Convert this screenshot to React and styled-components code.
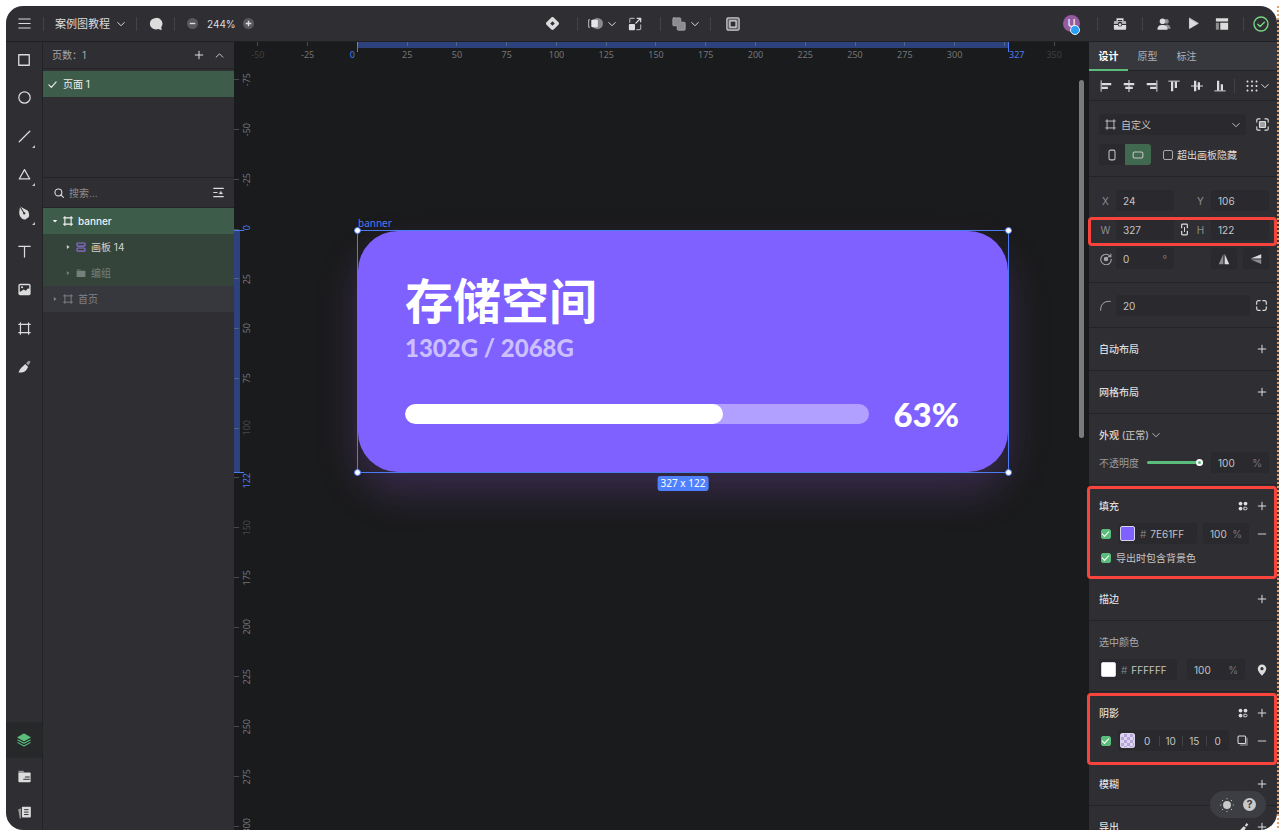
import React from "react";
import styled, { createGlobalStyle, css } from "styled-components";

const c = {
  panel: "#2f2e33",
  raised: "#37383d",
  field: "#2a292d",
  line: "#242427",
  canvas: "#1a1b1c",
  text: "#dcdcdd",
  soft: "#c4c4c6",
  muted: "#8d8d91",
  faint: "#6c6c70",
  green: "#5bbd7c",
  select: "#3d5c4a",
  blue: "#4b7cf3",
  purple: "#7e61ff",
  red: "#f9443e",
};

const Global = createGlobalStyle`
  * { box-sizing: border-box; }
  html, body, #root { height: 100%; }
  body {
    margin: 0;
    background: #fff;
    font: 10px/14px Inter, "Noto Sans CJK SC", sans-serif;
    color: ${c.text};
    overflow: hidden;
  }
  button, input, select { font: inherit; color: inherit; margin: 0; padding: 0; border: 0; background: none; border-radius: 0; }
  button { cursor: pointer; }
  h2, h3, p { margin: 0; font: inherit; }
`;

/* ---------- shell ---------- */

const Page = styled.div`
  height: 100%;
  padding: 6px 1px 3px 6px;
  display: flex;
`;

const Perforation = styled.div`
  width: 2px;
  flex: none;
  background:
    repeating-linear-gradient(to bottom, #dfa26c 0 2px, transparent 2px 4px),
    linear-gradient(to bottom, #fff 14px, #33353c 14px calc(100% - 14px), #fff calc(100% - 14px));
`;

const Window = styled.div`
  flex: 1;
  min-width: 0;
  display: grid;
  grid-template-rows: 36px minmax(0, 1fr);
  border-radius: 17px;
  overflow: hidden;
  background: ${c.panel};
`;

const Body = styled.div`
  display: grid;
  grid-template-columns: 37px 191px minmax(0, 1fr) 188px;
  min-height: 0;
`;

/* ---------- icons ---------- */

const Svg = styled.svg`
  display: block;
  flex: none;
  width: ${(p) => p.$size}px;
  height: ${(p) => p.$size}px;
  fill: none;
  stroke: currentColor;
  stroke-width: ${(p) => p.$w};
  stroke-linecap: round;
  stroke-linejoin: round;
`;

const shapes = {
  menu: <path d="M1 2.500h14M1 8h14M1 13.500h14" />,
  down: <path d="M1.500 5l6.500 6.500L14.500 5" />,
  up: <path d="M2 11l6-6 6 6" />,
  plus: <path d="M8 2v12M2 8h12" />,
  minus: <path d="M2 8h12" />,
  check: <path d="M1.500 8.500l4.500 4.500L14.500 3.500" />,
  comment: <path d="M8 1a7 6.600 0 1 0 0 13.200c1 0 2-.2 2.800-.5L14.500 15l-.5-3.500A6.600 6.600 0 0 0 8 1z" fill="currentColor" stroke="none" />,
  zoomOut: (
    <g stroke="none">
      <circle cx="8" cy="8" r="8" fill="#59595d" />
      <rect x="4" y="7" width="8" height="2" fill="#dedede" />
    </g>
  ),
  zoomIn: (
    <g stroke="none">
      <circle cx="8" cy="8" r="8" fill="#59595d" />
      <path d="M7 4h2v3h3v2H9v3H7V9H4V7h3z" fill="#dedede" />
    </g>
  ),
  component: (
    <path
      fill="currentColor"
      stroke="none"
      fillRule="evenodd"
      d="M8 0c.6 0 1 .2 1.400.6l6 6c.8.8.8 2 0 2.800l-6 6c-.8.8-2 .8-2.800 0l-6-6c-.8-.8-.8-2 0-2.800l6-6C7 .2 7.400 0 8 0zM8 5.200L5.200 8 8 10.800 10.800 8z"
    />
  ),
  mask: (
    <g>
      <circle cx="10" cy="8" r="6" fill="#8a8a8d" stroke="none" />
      <rect x="3.500" y="4" width="7" height="8" rx="1" fill="#e6e6e6" stroke="none" />
      <path d="M1.700 4H.7v8h1" stroke="#c4c4c6" />
    </g>
  ),
  scale: (
    <g>
      <path d="M2 6V2.500A1 1 0 0 1 3 1.500h4M14.500 9v4.500a1 1 0 0 1-1 1H10" stroke="#a5a5a8" />
      <rect x="1" y="8" width="7" height="7" rx="1" fill="#dedede" stroke="none" />
      <path d="M9 7l5-5M10.500 1.500h4v4" />
    </g>
  ),
  union: (
    <path
      d="M2 1h7a1 1 0 0 1 1 1v4h4a1 1 0 0 1 1 1v7a1 1 0 0 1-1 1H7a1 1 0 0 1-1-1v-4H2a1 1 0 0 1-1-1V2a1 1 0 0 1 1-1z"
      fill="#8d8d90"
      stroke="#a8a8aa"
    />
  ),
  slice: (
    <g>
      <rect x="1" y="1" width="14" height="14" rx="1.500" fill="#68686b" stroke="#c9c9cb" />
      <rect x="4.500" y="4.500" width="7" height="7" fill={c.panel} />
    </g>
  ),
  briefcase: (
    <g stroke="none">
      <path d="M4 1.500h8v3.500h-1.500V3.500h-5V5H4z" fill="currentColor" />
      <path d="M2 4.500h12a1 1 0 0 1 1 1V8h-4.500a2.500 2.500 0 0 0-5 0H1V5.500a1 1 0 0 1 1-1z" fill="#b2b2b4" />
      <path d="M1 9h4.500a2.600 2.600 0 0 0 5 0H15v4.500a1 1 0 0 1-1 1H2a1 1 0 0 1-1-1z" fill="currentColor" />
      <circle cx="8" cy="8.700" r="1.500" fill="currentColor" />
    </g>
  ),
  people: (
    <g stroke="none">
      <circle cx="10.800" cy="5" r="2.700" fill="#919194" />
      <path d="M10 8.500c3.500 0 5.500 1.500 5.500 5H9z" fill="#919194" />
      <circle cx="6.300" cy="4.800" r="3.200" fill="currentColor" />
      <path d="M.5 14.500c0-4 2-5.500 5.800-5.500s5.700 1.500 5.700 5.500z" fill="currentColor" />
    </g>
  ),
  play: <path d="M3 1.800v12.400L13.500 8z" fill="currentColor" />,
  layout: (
    <g stroke="none" fill="currentColor">
      <path d="M1 1.500h14v3.700H1z" />
      <path d="M1 6.500h3.500v8H1z" fill="#8d8d90" />
      <path d="M6 6.500h9v8H6z" />
    </g>
  ),
  done: (
    <g>
      <circle cx="8" cy="8" r="7" />
      <path d="M4.800 8.200l2.300 2.300 4.300-4.300" />
    </g>
  ),
  square: <rect x="2" y="2" width="12" height="12" />,
  circle: <circle cx="8" cy="8" r="7" />,
  lineTool: <path d="M1.500 14.500l13-13" />,
  triangle: <path d="M8 2L1.500 13.500h13z" />,
  pen: (
    <g stroke="none">
      <path d="M3.500.5L12.500 5.500c1.600 2.500 1.500 5 1 7L9.500 15.500C5 15 2.500 11.500 2.500 7z" fill="currentColor" />
      <path d="M4 1.500l4 6.500" stroke={c.panel} strokeWidth="1.200" />
      <circle cx="8.300" cy="8.500" r="1.300" fill={c.panel} />
    </g>
  ),
  text: <path d="M1 1.800h14M8 1.800v13" />,
  image: (
    <g stroke="none">
      <rect x=".5" y="1" width="15" height="14" rx="2" fill="currentColor" />
      <path d="M2.200 2.700h11.600V7.500l-1.500-1-2.600 3L7 8l-4.800 3z" fill={c.panel} />
      <circle cx="5" cy="5.200" r="1.300" fill="currentColor" />
    </g>
  ),
  frame: <path d="M3 1v14M13 1v14M1 3h14M1 13h14" />,
  slicer: (
    <g stroke="none">
      <path d="M.5 15.500c5 .2 8.500-1 10-3.500l2-3.500L9 5 4 9.500C2 11.500 1.500 13.500.5 15.500z" fill="currentColor" />
      <path d="M10 4L13 1c1.200-.5 2.500.7 2 2l-2.300 3.800z" fill="#9c9c9f" />
    </g>
  ),
  layers: (
    <g>
      <path d="M8 1.200L15 5 8 8.800 1 5z" fill="currentColor" />
      <path d="M1 8l7 3.800L15 8" />
      <path d="M1 11l7 3.800L15 11" />
    </g>
  ),
  assets: (
    <g stroke="none">
      <path d="M.5 1h6l1.500 2H.5z" fill="#99999c" />
      <rect x=".5" y="3" width="15" height="12" rx="1" fill="currentColor" />
      <path d="M9 8.500h5M7 11.500h7" stroke={c.panel} strokeWidth="1.300" />
    </g>
  ),
  library: (
    <g stroke="none">
      <path d="M.3 4L3.500 3v12.500l-1.200.2z" fill="#a0a0a3" />
      <rect x="4.800" y=".8" width="11" height="13.500" rx="1" fill="currentColor" />
      <path d="M8 4.500h4.500M8 7.500h4.500M8 10.500h4.500" stroke={c.panel} strokeWidth="1.200" />
    </g>
  ),
  search: (
    <g>
      <circle cx="7" cy="7" r="5.500" />
      <path d="M11 11l4 4" />
    </g>
  ),
  filter: (
    <g>
      <path d="M1 2h14M1 8h5M1 14h14" />
      <path d="M11.500 6l2.500 4H9z" fill="currentColor" strokeWidth=".5" />
    </g>
  ),
  caretRight: <path d="M5 2.500L12 8l-7 5.500z" fill="currentColor" stroke="none" />,
  caretDown: <path d="M2 5h12l-6 7z" fill="currentColor" stroke="none" />,
  stack: (
    <g stroke="#8f6ed8">
      <rect x="1.500" y="1.500" width="13" height="5" rx="1.500" />
      <rect x="1.500" y="9.500" width="13" height="5" rx="1.500" />
    </g>
  ),
  folder: (
    <g stroke="none" fill="currentColor">
      <path d="M1 2h6l1 2H1z" opacity=".6" />
      <rect x="1" y="4.500" width="14" height="10" rx="1" />
    </g>
  ),
  alignL: (
    <g>
      <path d="M1.500 1v14" strokeWidth="1.300" />
      <path d="M2 5.500h13M2 10.500h8.500" strokeWidth="3" strokeLinecap="butt" />
    </g>
  ),
  alignC: (
    <g strokeLinecap="butt">
      <path d="M8 0v16" strokeWidth="1.500" />
      <path d="M1 5.500h14M3 10.500h10" strokeWidth="3" />
    </g>
  ),
  alignR: (
    <g>
      <path d="M14.500 1v14" strokeWidth="1.300" />
      <path d="M1 5.500h13M5.500 10.500H14" strokeWidth="3" strokeLinecap="butt" />
    </g>
  ),
  alignT: (
    <g>
      <path d="M1 1.500h14" strokeWidth="1.300" />
      <path d="M5.500 2v13M10.500 2v8.500" strokeWidth="3" strokeLinecap="butt" />
    </g>
  ),
  alignM: (
    <g strokeLinecap="butt">
      <path d="M0 8h16" strokeWidth="1.500" />
      <path d="M5.500 1v14M10.500 3v10" strokeWidth="3" />
    </g>
  ),
  alignB: (
    <g>
      <path d="M1 14.500h14" strokeWidth="1.300" />
      <path d="M5.500 1v13M10.500 5.500V14" strokeWidth="3" strokeLinecap="butt" />
    </g>
  ),
  dots: (
    <g stroke="none" fill="currentColor">
      {[2, 8, 14].map((x) => [2, 8, 14].map((y) => <rect key={x + "-" + y} x={x - 1.2} y={y - 1.2} width="2.400" height="2.400" rx=".6" />))}
    </g>
  ),
  fit: (
    <g>
      <path d="M1 5V2.500A1.500 1.500 0 0 1 2.500 1H5M11 1h2.500A1.500 1.500 0 0 1 15 2.500V5M15 11v2.500a1.500 1.500 0 0 1-1.500 1.500H11M5 15H2.500A1.500 1.500 0 0 1 1 13.500V11" />
      <rect x="4.300" y="4.300" width="7.400" height="7.400" rx="1" fill="#a0a0a3" />
    </g>
  ),
  corners: (
    <path d="M1 6V3.500A2.500 2.500 0 0 1 3.500 1H6M10 1h2.500A2.500 2.500 0 0 1 15 3.500V6M15 10v2.500a2.500 2.500 0 0 1-2.500 2.500H10M6 15H3.500A2.500 2.500 0 0 1 1 12.500V10" />
  ),
  portrait: <rect x="4" y="1.500" width="8" height="13" rx="2" />,
  landscape: <rect x="1.500" y="4" width="13" height="8" rx="2" />,
  link: (
    <g>
      <path d="M4.500 5.800V2.500a1 1 0 0 1 1-1h5a1 1 0 0 1 1 1v3.300" />
      <path d="M4.500 10.200v3.300a1 1 0 0 0 1 1h5a1 1 0 0 0 1-1v-3.300" />
      <path d="M8 5.500v5" strokeWidth="1.200" />
    </g>
  ),
  rotate: (
    <g>
      <path d="M14 5A7 7 0 1 0 15 8.500M14.500 1.500V5H11" />
      <circle cx="8" cy="8" r="2.300" fill="currentColor" />
    </g>
  ),
  flipH: (
    <g stroke="none">
      <path d="M7.200 1v14H1z" fill="#8d8d90" />
      <path d="M8.800 1v14H15z" fill="currentColor" />
    </g>
  ),
  flipV: (
    <g stroke="none">
      <path d="M15 1.500v5.700H1z" fill="currentColor" />
      <path d="M15 14.500V8.800H1z" fill="#8d8d90" />
    </g>
  ),
  radius: <path d="M1 15v-2A11 11 0 0 1 12 2h3" />,
  styles: (
    <g>
      <circle cx="4" cy="4" r="3" fill="currentColor" stroke="none" />
      <circle cx="12" cy="4" r="3" fill="currentColor" stroke="none" />
      <circle cx="4" cy="12" r="3" fill="currentColor" stroke="none" />
      <path d="M10 10h2.500a2 2 0 0 1 0 4H10z" />
    </g>
  ),
  pin: (
    <path
      d="M8 .5A5.700 5.700 0 0 0 2.300 6.200C2.300 10 8 15.500 8 15.500s5.700-5.500 5.700-9.300A5.700 5.700 0 0 0 8 .5zm0 7.800a2.100 2.100 0 1 1 0-4.200 2.100 2.100 0 0 1 0 4.200z"
      fill="currentColor"
      stroke="none"
    />
  ),
  shadow: (
    <g>
      <path d="M5 14.500h9.500V5" stroke="#77777a" strokeWidth="2.400" />
      <rect x="1.500" y="1.500" width="11" height="11" rx="1.500" fill={c.panel} />
    </g>
  ),
  knife: (
    <path d="M1 15.500c4 0 7-1.500 8.500-4l2-3-3-2.500L4 10.500zM10 5l2.500-3.500 2.500 2L12 7z" fill="currentColor" stroke="none" />
  ),
  sun: (
    <g>
      <circle cx="8" cy="8" r="4.500" fill="currentColor" stroke="none" />
      <path d="M8 .7v.2M8 15.100v.2M.7 8h.2M15.100 8h.2M2.800 2.800l.1.100M13.100 13.100l.1.100M2.800 13.200l.1-.1M13.100 2.900l.1-.1" />
    </g>
  ),
};

const Icon = ({ name, size = 12, w = 1.5 }) => (
  <Svg viewBox="0 0 16 16" $size={size} $w={w} aria-hidden="true">
    {shapes[name]}
  </Svg>
);

const IconButton = styled.button`
  display: flex;
  align-items: center;
  justify-content: center;
  flex: none;
  width: ${(p) => p.$w || 14}px;
  height: ${(p) => p.$h || 20}px;
  color: ${(p) => p.$color || c.text};
`;

/* ---------- top bar ---------- */

const TopBar = styled.header`
  display: grid;
  grid-template-columns: 1fr auto 1fr;
  align-items: center;
  border-bottom: 1px solid #202022;
`;

const BarGroup = styled.div`
  display: flex;
  align-items: center;
  justify-content: ${(p) => (p.$end ? "flex-end" : "flex-start")};
`;

const BarCell = styled.div`
  display: flex;
  align-items: center;
  gap: ${(p) => p.$gap || 4}px;
  padding: 0 ${(p) => p.$pad || 12}px;
  border-left: ${(p) => (p.$bare ? "none" : "1px solid #434347")};
`;

const TitleButton = styled.button`
  display: flex;
  align-items: center;
  gap: 7px;
  height: 14px;
  font-size: 11px;
`;

const Zoom = styled.output`
  width: 27px;
  text-align: center;
`;

const Avatar = styled.button`
  position: relative;
  width: 17px;
  height: 17px;
  border-radius: 50%;
  background: #955aa0;
  color: #f3eaf5;
  font-size: 11px;
  font-weight: 500;
  line-height: 17px;
  &::after {
    content: "";
    position: absolute;
    right: 0;
    bottom: -3px;
    width: 8px;
    height: 8px;
    border-radius: 50%;
    background: #27a0f5;
    border: 1px solid #e8f4fd;
  }
`;

/* ---------- tool strip ---------- */

const ToolStrip = styled.nav`
  display: flex;
  flex-direction: column;
  justify-content: space-between;
  border-right: 1px solid #232326;
`;

const ToolList = styled.div`
  display: flex;
  flex-direction: column;
  justify-content: space-between;
  height: ${(p) => p.$h}px;
`;

const Tool = styled.button`
  position: relative;
  display: flex;
  align-items: center;
  justify-content: center;
  height: ${(p) => (p.$tab ? 36 : 35)}px;
  background: ${(p) => (p.$active ? "#26282a" : "none")};
  color: ${(p) => (p.$active ? c.green : c.text)};
  ${(p) =>
    p.$more &&
    css`
      &::after {
        content: "";
        position: absolute;
        right: 7px;
        bottom: 6px;
        border: solid transparent;
        border-width: 0 0 3px 3px;
        border-bottom-color: ${c.soft};
      }
    `}
`;

/* ---------- layer panel ---------- */

const SidePanel = styled.aside`
  display: flex;
  flex-direction: column;
  min-height: 0;
`;

const PagesHead = styled.div`
  display: flex;
  align-items: center;
  gap: 6px;
  height: 27px;
  padding: 0 8px 0 9px;
  color: #a9a9ac;
  border-bottom: 1px solid ${c.line};
  h2 { flex: 1; }
`;

const PageList = styled.div`
  height: 109px;
  padding-top: 2px;
  border-bottom: 1px solid ${c.line};
`;

const PageRow = styled.button`
  display: flex;
  align-items: center;
  gap: 6px;
  width: 100%;
  height: 26px;
  padding-left: 5px;
  background: ${c.select};
  color: #eee;
`;

const SearchRow = styled.div`
  display: flex;
  align-items: center;
  gap: 5px;
  height: 30px;
  padding: 0 9px 0 11px;
  border-bottom: 1px solid ${c.line};
  input {
    flex: 1;
    min-width: 0;
    outline: none;
  }
  input::placeholder { color: ${c.muted}; opacity: 1; }
`;

const layerTone = {
  selected: css`background: ${c.select}; color: #f2f2f2; font-weight: 500;`,
  child: css`background: #35443b; color: #d0d3d1;`,
  hidden: css`background: #35443b; color: #74807a;`,
  hover: css`background: ${c.raised}; color: #818185;`,
};

const Layer = styled.button`
  display: flex;
  align-items: center;
  gap: 5px;
  width: 100%;
  height: 26px;
  padding-left: ${(p) => (p.$depth ? 22 : 9)}px;
  ${(p) => layerTone[p.$tone]}
`;

/* ---------- canvas ---------- */

const Canvas = styled.main`
  position: relative;
  overflow: hidden;
  background: ${c.canvas};
  font-family: "Noto Sans", "Noto Sans CJK SC", sans-serif;
`;

const RulerX = styled.div`
  position: absolute;
  left: -1px;
  top: 0;
  width: 846px;
  display: grid;
  grid-template-columns: repeat(17, 1fr);
`;

const RulerY = styled.div`
  position: absolute;
  left: 0;
  top: 13px;
  height: 796px;
  display: grid;
  grid-template-rows: repeat(16, 1fr);
`;

const MarkX = styled.span`
  display: flex;
  flex-direction: column;
  align-items: center;
  gap: 3px;
  font-size: 9px;
  line-height: 12px;
  color: ${(p) => (p.$dim ? "#3f4042" : "#747577")};
  &::before {
    content: "";
    width: 1px;
    height: 4px;
    background: rgba(140, 145, 155, 0.4);
  }
`;

const MarkY = styled.span`
  display: flex;
  align-items: center;
  gap: 2px;
  font-size: 9px;
  line-height: 12px;
  color: ${(p) => (p.$dim ? "#48494b" : "#747577")};
  &::before {
    content: "";
    width: 5px;
    height: 1px;
    background: rgba(140, 145, 155, 0.4);
  }
  b { font-weight: 400; writing-mode: vertical-rl; transform: rotate(180deg); }
`;

const RangeX = styled.div`
  position: absolute;
  left: 123px;
  top: 0;
  width: 652px;
  height: 6px;
  background: #2d427c;
  &::before, &::after {
    content: "";
    position: absolute;
    top: 0;
    width: 1px;
    height: 10px;
    background: ${c.blue};
  }
  &::before { left: 0; }
  &::after { right: 0; }
`;

const RangeY = styled.div`
  position: absolute;
  left: 0;
  top: 188px;
  width: 6px;
  height: 243px;
  background: #2d427c;
  &::before, &::after {
    content: "";
    position: absolute;
    left: 0;
    width: 10px;
    height: 1px;
    background: ${c.blue};
  }
  &::before { top: 0; }
  &::after { bottom: 0; }
`;

const EdgeLabel = styled.span`
  position: absolute;
  font-size: 9px;
  line-height: 12px;
  color: ${c.blue};
  ${(p) => p.$at === "left" && css`right: 100%; top: 7px; margin-right: 2px;`}
  ${(p) => p.$at === "right" && css`left: 100%; top: 7px;`}
  ${(p) => p.$at === "top" && css`left: 7px; bottom: 100%; writing-mode: vertical-rl; transform: rotate(180deg);`}
  ${(p) => p.$at === "bottom" && css`left: 7px; top: 100%; writing-mode: vertical-rl; transform: rotate(180deg);`}
`;

const Selection = styled.section`
  position: absolute;
  left: 124px;
  top: 189px;
  width: 650px;
  height: 241px;
  outline: 1px solid ${c.blue};
`;

const Handle = styled.i`
  position: absolute;
  width: 7px;
  height: 7px;
  border-radius: 50%;
  background: #fff;
  border: 1px solid ${c.blue};
  ${(p) => (p.$v === "top" ? "top: -4px;" : "bottom: -4px;")}
  ${(p) => (p.$h === "left" ? "left: -4px;" : "right: -4px;")}
`;

const FrameName = styled.span`
  position: absolute;
  left: 0;
  bottom: 100%;
  color: ${c.blue};
  line-height: 16px;
`;

const SizeChip = styled.span`
  position: absolute;
  left: 50%;
  top: 100%;
  margin-top: 4px;
  transform: translateX(-50%);
  padding: 0 3px;
  border-radius: 3px;
  background: #4f81ff;
  color: #fff;
  line-height: 15px;
  white-space: nowrap;
`;

const Banner = styled.article`
  height: 100%;
  padding: 46px 49px 0 47px;
  border-radius: 40px;
  background: ${c.purple};
  box-shadow: 0 20px 40px rgba(151, 92, 225, 0.25);
  color: #fff;
  font-family: Lato, "Noto Sans CJK SC", sans-serif;
  font-weight: 900;
`;

const BannerTitle = styled.h2`
  && { font-size: 48px; line-height: 48px; font-weight: 700; }
`;

const Usage = styled.p`
  && { margin-top: 8px; font-size: 24px; line-height: 30px; font-weight: 900; color: #cbbfff; }
`;

const ProgressRow = styled.div`
  display: grid;
  grid-template-columns: 1fr auto;
  align-items: center;
  gap: 24px;
  margin-top: 31px;
  font-size: 33px;
  line-height: 40px;
`;

const Track = styled.div`
  height: 20px;
  border-radius: 10px;
  background: #b1a0ff;
  overflow: hidden;
`;

const Bar = styled.div`
  height: 100%;
  border-radius: 10px;
  background: #fff;
`;

const ScrollThumb = styled.div`
  position: absolute;
  right: 5px;
  top: 38px;
  width: 5px;
  height: 358px;
  border-radius: 3px;
  background: #7a7a7b;
`;

/* ---------- inspector ---------- */

const Inspector = styled.aside`
  position: relative;
  min-height: 0;
`;

const Tabs = styled.div`
  display: flex;
  height: 29px;
  background: ${c.raised};
  border-bottom: 1px solid #222225;
`;

const Tab = styled.button`
  width: 39px;
  height: 29px;
  border-bottom: 2px solid ${(p) => (p.$active ? c.green : "transparent")};
  color: ${(p) => (p.$active ? "#fff" : "#b2b2b5")};
  font-weight: ${(p) => (p.$active ? 700 : 400)};
`;

const AlignRow = styled.div`
  display: flex;
  align-items: center;
  height: 30px;
  padding: 0 8px 0 10px;
  border-bottom: 1px solid ${c.line};
`;

const AlignSet = styled.div`
  flex: 1;
  display: flex;
  justify-content: space-between;
`;

const AlignMore = styled.button`
  display: flex;
  align-items: center;
  gap: 3px;
  height: 14px;
  margin-left: 7px;
  padding-left: 11px;
  border-left: 1px solid #434347;
`;

const Section = styled.section`
  position: relative;
  display: flex;
  flex-direction: column;
  gap: ${(p) => p.$gap || 6}px;
  padding: ${(p) => p.$top || 10}px 8px ${(p) => p.$bottom || 11}px 10px;
  border-bottom: 1px solid ${c.line};
`;

const Outline = styled.div`
  position: absolute;
  z-index: 2;
  inset: ${(p) => p.$inset};
  border: 3px solid ${c.red};
  border-radius: 4px;
  pointer-events: none;
`;

const Head = styled.div`
  display: flex;
  align-items: center;
  gap: 5px;
  height: 22px;
`;

const Heading = styled.h3`
  flex: 1;
  && { font-weight: ${(p) => (p.$soft ? 400 : 500)}; }
  color: ${(p) => (p.$soft ? "#aaaaad" : c.text)};
`;

const ModeButton = styled.button`
  display: inline-flex;
  align-items: center;
  gap: 3px;
  color: #b5b5b8;
`;

const Row = styled.div`
  position: relative;
  display: flex;
  align-items: center;
  gap: ${(p) => p.$gap || 6}px;
  height: ${(p) => p.$h || 21}px;
`;

const Geometry = styled.div`
  position: relative;
  display: grid;
  grid-template-columns: 13px 1fr 12px 13px 1fr;
  column-gap: 4px;
  align-items: center;
  justify-items: stretch;
  height: 21px;
  label { text-align: center; color: ${c.muted}; }
`;

const FieldBox = styled.div`
  display: flex;
  align-items: center;
  flex: ${(p) => (p.$w ? "none" : 1)};
  width: ${(p) => (p.$w ? p.$w + "px" : "auto")};
  min-width: 0;
  height: 21px;
  padding: 0 7px;
  border-radius: 3px;
  background: ${c.field};
  color: #77777b;
  input {
    flex: 1;
    width: 100%;
    min-width: 0;
    color: ${c.soft};
    outline: none;
  }
`;

const ColorField = styled(FieldBox)`
  gap: 4px;
  padding: 0 2px;
`;

const Swatch = styled.button`
  flex: none;
  width: 15px;
  height: 15px;
  margin-right: 1px;
  border-radius: 2px;
  border: 1px solid #d5d3e6;
  background: ${(p) =>
    p.$checker
      ? "repeating-conic-gradient(#b8a3dc 0 25%, #ddd5ee 0 50%) 0 0 / 6px 6px"
      : p.$color};
`;

const Cells = styled(FieldBox)`
  padding: 0 0 0 2px;
  input {
    height: 10px;
    text-align: center;
  }
  input + input { border-left: 1px solid #434347; }
`;

const SelectBox = styled.div`
  position: relative;
  flex: 1;
  display: flex;
  align-items: center;
  gap: 5px;
  height: 21px;
  padding: 0 6px;
  border-radius: 3px;
  background: ${c.field};
  color: ${c.soft};
  select {
    flex: 1;
    min-width: 0;
    appearance: none;
    outline: none;
  }
`;

const Segment = styled.div`
  display: flex;
  border-radius: 3px;
  overflow: hidden;
  background: ${c.field};
`;

const SegmentButton = styled.button`
  display: flex;
  align-items: center;
  justify-content: center;
  width: 26px;
  height: 21px;
  background: ${(p) => (p.$on ? "#41694f" : "none")};
  color: ${c.soft};
`;

const CheckLabel = styled.label`
  display: flex;
  align-items: center;
  gap: 4px;
  color: ${(p) => (p.$bright ? c.text : c.soft)};
`;

const OpacityLabel = styled.label`
  color: #9b9b9e;
`;

const Check = styled.input.attrs({ type: "checkbox" })`
  appearance: none;
  flex: none;
  width: 10px;
  height: 10px;
  border-radius: 2px;
  border: 1px solid #a9a9ac;
  &:checked {
    border-color: ${c.green};
    background: ${c.green};
  }
  &:checked::after {
    content: "";
    display: block;
    width: 6px;
    height: 3px;
    margin: 1px auto 0;
    border: solid #fff;
    border-width: 0 0 1px 1px;
    transform: rotate(-45deg);
  }
`;

const CheckSlot = styled.span`
  display: flex;
  justify-content: center;
  flex: none;
  width: 13px;
`;

const Slider = styled.input.attrs({ type: "range" })`
  appearance: none;
  flex: 1;
  min-width: 0;
  height: 7px;
  &::-webkit-slider-runnable-track {
    height: 3px;
    border-radius: 2px;
    background: ${c.green};
  }
  &::-webkit-slider-thumb {
    appearance: none;
    width: 7px;
    height: 7px;
    margin-top: -2px;
    border-radius: 50%;
    border: 2px solid #fff;
    background: ${c.green};
  }
`;

const FlipButton = styled(IconButton)`
  border-radius: 3px;
  background: ${c.field};
`;

const FlipSet = styled.div`
  grid-column: 4 / 6;
  display: flex;
  justify-content: flex-end;
  gap: 6px;
`;

const HelpPill = styled.div`
  position: absolute;
  z-index: 3;
  right: 11px;
  bottom: 12px;
  display: flex;
  align-items: center;
  justify-content: center;
  gap: 9px;
  width: 56px;
  height: 27px;
  border-radius: 14px;
  background: #3d3e43;
`;

const Help = styled.button`
  width: 13px;
  height: 13px;
  border-radius: 50%;
  background: #c9c9cb;
  color: #3d3e43;
  font-size: 11px;
  font-weight: 700;
  line-height: 13px;
`;

const Field = ({ id, label, value, unit, w }) => (
  <FieldBox $w={w}>
    <input id={id} aria-label={label} defaultValue={value} />
    {unit}
  </FieldBox>
);

const AddOnly = ({ title }) => (
  <Section $bottom={10}>
    <Head>
      <Heading>{title}</Heading>
      <IconButton aria-label={"添加" + title}><Icon name="plus" size={10} w={1.6} /></IconButton>
    </Head>
  </Section>
);

const StyledHead = ({ title }) => (
  <Head>
    <Heading>{title}</Heading>
    <IconButton aria-label={title + "样式"}><Icon name="styles" size={10} /></IconButton>
    <IconButton aria-label={"添加" + title}><Icon name="plus" size={10} w={1.6} /></IconButton>
  </Head>
);

const tools = [
  ["square", "矩形", 14],
  ["circle", "椭圆", 13],
  ["lineTool", "直线", 13, true],
  ["triangle", "三角形", 13, true],
  ["pen", "钢笔", 14, true],
  ["text", "文字", 13],
  ["image", "图片", 13],
  ["frame", "画板", 13],
  ["slicer", "切图", 13],
];

const marksX = Array.from({ length: 17 }, (_, i) => -50 + i * 25);
const marksY = Array.from({ length: 16 }, (_, i) => -75 + i * 25);
const usage = { used: 68.5 };

export default function App() {
  return (
    <Page>
      <Global />
      <Window>
        <TopBar>
          <BarGroup>
            <IconButton $w={37} aria-label="菜单"><Icon name="menu" size={13} w={1.3} /></IconButton>
            <BarCell $pad={11}>
              <TitleButton>案例图教程<Icon name="down" size={8} w={2} /></TitleButton>
            </BarCell>
            <BarCell>
              <IconButton $w={13} $h={14} aria-label="评论"><Icon name="comment" size={14} /></IconButton>
            </BarCell>
            <BarCell $gap={9}>
              <IconButton $w={11} $h={14} aria-label="缩小"><Icon name="zoomOut" size={11} /></IconButton>
              <Zoom>244%</Zoom>
              <IconButton $w={11} $h={14} aria-label="放大"><Icon name="zoomIn" size={11} /></IconButton>
            </BarCell>
          </BarGroup>
          <BarGroup>
            <BarCell $bare $pad={17}>
              <IconButton $h={14} aria-label="组件"><Icon name="component" size={13} /></IconButton>
            </BarCell>
            <BarCell $pad={11} $gap={5}>
              <IconButton $h={14} aria-label="蒙版"><Icon name="mask" size={15} w={1} /></IconButton>
              <IconButton $w={8} $h={14} aria-label="蒙版选项"><Icon name="down" size={8} w={2} /></IconButton>
              <BarCell $bare $pad={7}>
                <IconButton $h={14} aria-label="缩放"><Icon name="scale" size={14} w={1.4} /></IconButton>
              </BarCell>
            </BarCell>
            <BarCell $pad={11} $gap={5}>
              <IconButton $h={14} aria-label="布尔运算"><Icon name="union" size={14} w={1} /></IconButton>
              <IconButton $w={8} $h={14} aria-label="布尔选项"><Icon name="down" size={8} w={2} /></IconButton>
            </BarCell>
            <BarCell $pad={15}>
              <IconButton $h={14} aria-label="切片"><Icon name="slice" size={14} w={1.4} /></IconButton>
            </BarCell>
          </BarGroup>
          <BarGroup $end>
            <BarCell $bare $pad={17}>
              <Avatar aria-label="用户">U</Avatar>
            </BarCell>
            <BarCell $pad={15}>
              <IconButton $h={14} aria-label="资源"><Icon name="briefcase" size={14} /></IconButton>
            </BarCell>
            <BarCell $pad={14} $gap={15}>
              <IconButton $h={14} aria-label="成员"><Icon name="people" size={14} /></IconButton>
              <IconButton $h={14} aria-label="播放"><Icon name="play" size={13} w={1} /></IconButton>
              <IconButton $h={14} aria-label="布局"><Icon name="layout" size={14} /></IconButton>
            </BarCell>
            <BarCell $pad={9}>
              <IconButton $h={14} $w={15} $color="#78d57f" aria-label="已保存"><Icon name="done" size={16} w={1.4} /></IconButton>
            </BarCell>
          </BarGroup>
        </TopBar>

        <Body>
          <ToolStrip>
            <ToolList $h={342}>
              {tools.map(([name, label, size, more]) => (
                <Tool key={name} $more={more} aria-label={label}><Icon name={name} size={size} w={1.5} /></Tool>
              ))}
            </ToolList>
            <ToolList $h={108}>
              <Tool $tab $active aria-label="图层"><Icon name="layers" size={14} w={1.3} /></Tool>
              <Tool $tab aria-label="组件库"><Icon name="assets" size={13} /></Tool>
              <Tool $tab aria-label="资源库"><Icon name="library" size={13} /></Tool>
            </ToolList>
          </ToolStrip>

          <SidePanel>
            <PagesHead>
              <h2>页数：1</h2>
              <IconButton aria-label="添加页面"><Icon name="plus" size={10} w={1.6} /></IconButton>
              <IconButton aria-label="收起"><Icon name="up" size={9} w={1.6} /></IconButton>
            </PagesHead>
            <PageList>
              <PageRow><Icon name="check" size={9} w={2} />页面 1</PageRow>
            </PageList>
            <SearchRow>
              <Icon name="search" size={10} w={1.8} />
              <input aria-label="搜索图层" placeholder="搜索..." />
              <IconButton aria-label="筛选"><Icon name="filter" size={11} w={1.5} /></IconButton>
            </SearchRow>
            <Layer $tone="selected"><Icon name="caretDown" size={6} /><Icon name="frame" size={10} w={1.8} />banner</Layer>
            <Layer $tone="child" $depth={1}><Icon name="caretRight" size={6} /><Icon name="stack" size={10} w={1.8} />画板 14</Layer>
            <Layer $tone="hidden" $depth={1}><Icon name="caretRight" size={6} /><Icon name="folder" size={10} />编组</Layer>
            <Layer $tone="hover"><Icon name="caretRight" size={6} /><Icon name="frame" size={10} w={1.5} />首页</Layer>
          </SidePanel>

          <Canvas>
            <RangeX>
              <EdgeLabel $at="left">0</EdgeLabel>
              <EdgeLabel $at="right">327</EdgeLabel>
            </RangeX>
            <RangeY>
              <EdgeLabel $at="top">0</EdgeLabel>
              <EdgeLabel $at="bottom">122</EdgeLabel>
            </RangeY>
            <RulerX>
              {marksX.map((n) => (
                <MarkX key={n} $dim={n === -50 || n === 350}>{n === 0 || n === 325 ? "" : n}</MarkX>
              ))}
            </RulerX>
            <RulerY>
              {marksY.map((n) => (
                <MarkY key={n} $dim={n === 100 || n === 150}><b>{n === 0 || n === 125 ? "" : n}</b></MarkY>
              ))}
            </RulerY>

            <Selection aria-label="banner">
              <Banner>
                <BannerTitle>存储空间</BannerTitle>
                <Usage>1302G / 2068G</Usage>
                <ProgressRow>
                  <Track role="progressbar" aria-label="存储空间" aria-valuenow={63}>
                    <Bar style={{ width: usage.used + "%" }} />
                  </Track>
                  63%
                </ProgressRow>
              </Banner>
              <FrameName>banner</FrameName>
              <SizeChip>327 x 122</SizeChip>
              <Handle $v="top" $h="left" />
              <Handle $v="top" $h="right" />
              <Handle $v="bottom" $h="left" />
              <Handle $v="bottom" $h="right" />
            </Selection>
            <ScrollThumb />
          </Canvas>

          <Inspector>
            <Tabs>
              <Tab $active>设计</Tab>
              <Tab>原型</Tab>
              <Tab>标注</Tab>
            </Tabs>
            <AlignRow>
              <AlignSet>
                {[["alignL", "左对齐"], ["alignC", "水平居中"], ["alignR", "右对齐"], ["alignT", "顶对齐"], ["alignM", "垂直居中"], ["alignB", "底对齐"]].map(([n, l]) => (
                  <IconButton key={n} aria-label={l}><Icon name={n} size={12} /></IconButton>
                ))}
              </AlignSet>
              <AlignMore aria-label="更多对齐"><Icon name="dots" size={12} /><Icon name="down" size={8} w={2} /></AlignMore>
            </AlignRow>

            <Section $top={13} $gap={9} $bottom={11}>
              <Row $gap={9}>
                <SelectBox>
                  <Icon name="frame" size={11} w={1.4} />
                  <select aria-label="画板尺寸"><option>自定义</option></select>
                  <Icon name="down" size={8} w={2} />
                </SelectBox>
                <IconButton aria-label="适应内容"><Icon name="fit" size={13} w={1.4} /></IconButton>
              </Row>
              <Row $gap={12}>
                <Segment>
                  <SegmentButton aria-label="纵向"><Icon name="portrait" size={12} w={1.4} /></SegmentButton>
                  <SegmentButton $on aria-label="横向"><Icon name="landscape" size={12} w={1.4} /></SegmentButton>
                </Segment>
                <CheckLabel $bright><Check />超出画板隐藏</CheckLabel>
              </Row>
            </Section>

            <Section $top={13} $gap={8} $bottom={13}>
              <Geometry>
                <label htmlFor="x">X</label><Field id="x" value="24" />
                <span />
                <label htmlFor="y">Y</label><Field id="y" value="106" />
              </Geometry>
              <Geometry>
                <label htmlFor="w">W</label><Field id="w" value="327" />
                <IconButton $w={12} aria-label="锁定比例"><Icon name="link" size={13} w={1.5} /></IconButton>
                <label htmlFor="h">H</label><Field id="h" value="122" />
                <Outline $inset="-2px -8px -6px -11px" />
              </Geometry>
              <Geometry>
                <IconButton $w={13} $color="#a9a9ac" aria-label="旋转"><Icon name="rotate" size={12} w={1.4} /></IconButton>
                <Field label="角度" value="0" unit="°" />
                <span />
                <FlipSet>
                  <FlipButton $w={26} $h={21} aria-label="水平翻转"><Icon name="flipH" size={12} /></FlipButton>
                  <FlipButton $w={26} $h={21} aria-label="垂直翻转"><Icon name="flipV" size={12} /></FlipButton>
                </FlipSet>
              </Geometry>
            </Section>

            <Section $top={12} $bottom={11}>
              <Row $gap={4}>
                <IconButton $w={13} $color="#a9a9ac" aria-label="圆角"><Icon name="radius" size={11} w={1.4} /></IconButton>
                <Field label="圆角半径" value="20" />
                <IconButton $w={15} aria-label="独立圆角"><Icon name="corners" size={11} w={1.7} /></IconButton>
              </Row>
            </Section>

            <AddOnly title="自动布局" />
            <AddOnly title="网格布局" />

            <Section>
              <Head>
                <Heading>外观 <ModeButton>(正常)<Icon name="down" size={8} w={2} /></ModeButton></Heading>
              </Head>
              <Row $gap={8}>
                <OpacityLabel htmlFor="opacity">不透明度</OpacityLabel>
                <Slider id="opacity" defaultValue={100} />
                <Field label="不透明度数值" w={58} value="100" unit="%" />
              </Row>
            </Section>

            <Section>
              <StyledHead title="填充" />
              <Row>
                <CheckSlot><Check defaultChecked aria-label="显示填充" /></CheckSlot>
                <ColorField>
                  <Swatch $color={c.purple} aria-label="填充颜色" />
                  #<input aria-label="填充色值" defaultValue="7E61FF" />
                </ColorField>
                <Field label="填充不透明度" w={46} value="100" unit="%" />
                <IconButton aria-label="移除填充"><Icon name="minus" size={10} w={1.5} /></IconButton>
              </Row>
              <Row $h={16}>
                <CheckLabel><CheckSlot><Check defaultChecked /></CheckSlot>导出时包含背景色</CheckLabel>
              </Row>
              <Outline $inset="1px 0 -2px -2px" />
            </Section>

            <AddOnly title="描边" />

            <Section>
              <Head><Heading $soft>选中颜色</Heading></Head>
              <Row $gap={10}>
                <ColorField>
                  <Swatch $color="#fff" aria-label="选中颜色" />
                  #<input aria-label="选中色值" defaultValue="FFFFFF" />
                </ColorField>
                <Field label="选中颜色不透明度" w={58} value="100" unit="%" />
                <IconButton aria-label="定位"><Icon name="pin" size={12} /></IconButton>
              </Row>
            </Section>

            <Section>
              <StyledHead title="阴影" />
              <Row>
                <CheckSlot><Check defaultChecked aria-label="显示阴影" /></CheckSlot>
                <Cells>
                  <Swatch $checker aria-label="阴影颜色" />
                  <input aria-label="X 偏移" defaultValue="0" />
                  <input aria-label="Y 偏移" defaultValue="10" />
                  <input aria-label="模糊半径" defaultValue="15" />
                  <input aria-label="扩展" defaultValue="0" />
                </Cells>
                <IconButton aria-label="阴影类型"><Icon name="shadow" size={11} w={1.5} /></IconButton>
                <IconButton aria-label="移除阴影"><Icon name="minus" size={10} w={1.5} /></IconButton>
              </Row>
              <Outline $inset="1px 0 -3px -2px" />
            </Section>

            <AddOnly title="模糊" />

            <Section>
              <Head>
                <Heading>导出</Heading>
                <IconButton aria-label="切图"><Icon name="knife" size={11} /></IconButton>
                <IconButton aria-label="添加导出"><Icon name="plus" size={10} w={1.6} /></IconButton>
              </Head>
            </Section>

            <HelpPill>
              <IconButton $color="#c9c9cb" aria-label="主题"><Icon name="sun" size={14} w={1.2} /></IconButton>
              <Help aria-label="帮助">?</Help>
            </HelpPill>
          </Inspector>
        </Body>
      </Window>
      <Perforation />
    </Page>
  );
}
